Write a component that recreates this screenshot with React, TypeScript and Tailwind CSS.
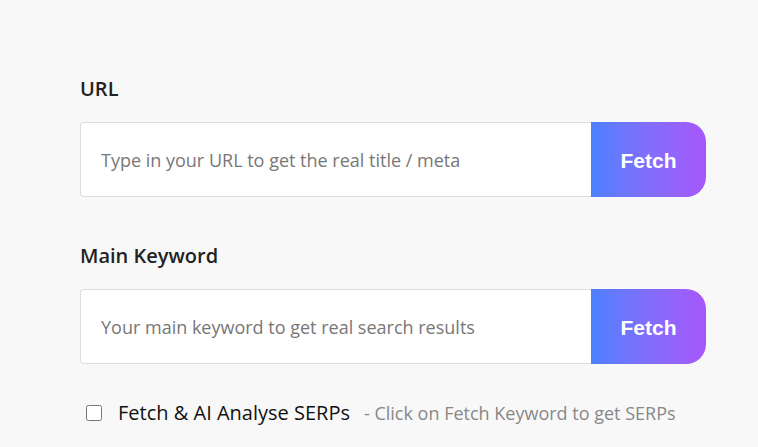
export default function App() {
  const inputCls =
    "flex-1 h-full px-5 bg-white border border-[#dddddd] border-r-0 rounded-l-[4px] text-[18px] text-[#333] placeholder:text-[#777] outline-none";
  const btnCls =
    "w-[115px] h-full rounded-r-[20px] bg-gradient-to-r from-[#4a80ff] to-[#a656fb] text-white text-[21px] font-bold pt-[2px]";

  return (
    <div className="w-[758px] h-[447px] bg-[#f8f8f8] overflow-hidden" style={{ fontFamily: '"Open Sans", sans-serif' }}>
      <div className="pl-[80px] pr-[52px] pt-[76px]">
        {/* URL */}
        <label className="block text-[20px] font-semibold text-[#222] leading-[26px]">URL</label>
        <div className="flex h-[75px] mt-[20px]">
          <input type="text" placeholder="Type in your URL to get the real title / meta" className={inputCls} />
          <button className={btnCls} style={{ fontFamily: '"Liberation Sans", Arial, sans-serif' }}>
            Fetch
          </button>
        </div>

        {/* Main Keyword */}
        <label className="block mt-[46px] text-[20px] font-semibold text-[#222] leading-[26px]">Main Keyword</label>
        <div className="flex h-[75px] mt-[20px]">
          <input type="text" placeholder="Your main keyword to get real search results" className={inputCls} />
          <button className={btnCls} style={{ fontFamily: '"Liberation Sans", Arial, sans-serif' }}>
            Fetch
          </button>
        </div>

        {/* checkbox */}
        <div className="flex items-center mt-[34px] pl-[6px]">
          <input type="checkbox" className="w-[16px] h-[16px] m-0" />
          <span className="ml-[16px] text-[20px] text-[#111]">Fetch &amp; AI Analyse SERPs</span>
          <span className="ml-[14px] text-[18px] text-[#888]">- Click on Fetch Keyword to get SERPs</span>
        </div>
      </div>
    </div>
  );
}
